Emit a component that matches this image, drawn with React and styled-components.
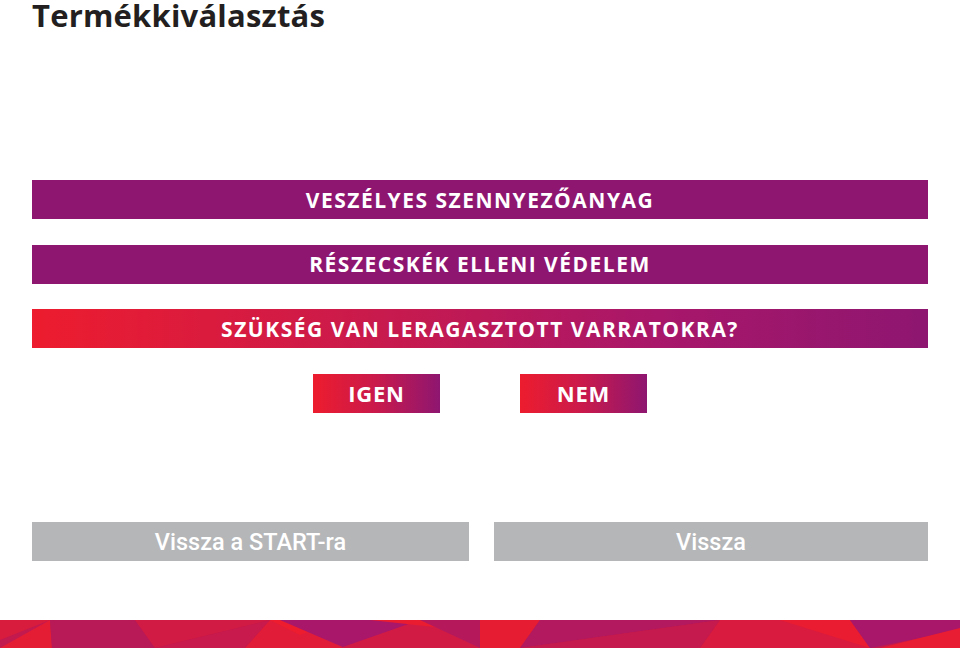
import React from "react";
import styled, { createGlobalStyle } from "styled-components";

const Global = createGlobalStyle`
  html, body { margin: 0; padding: 0; background: #ffffff; }
  body { font-family: "Open Sans", "Liberation Sans", sans-serif; }
`;

const Page = styled.div`
  width: 960px;
  height: 648px;
  display: flex;
  flex-direction: column;
  overflow: hidden;
`;

const Title = styled.h1`
  margin: 0;
  padding: 0 0 0 32px;
  height: 34px;
  font-family: "Open Sans", sans-serif;
  font-weight: 700;
  font-size: 31px;
  line-height: 31px;
  color: #231f20;
  letter-spacing: 0.2px;
`;

const Stack = styled.div`
  margin-top: 146px;
  padding: 0 32px;
  display: flex;
  flex-direction: column;
  gap: 25.5px;
`;

const Bar = styled.div`
  height: 39px;
  display: flex;
  align-items: center;
  justify-content: center;
  background: ${(p) =>
    p.$gradient
      ? "linear-gradient(90deg, #ed1c2e 0%, #c71a4e 40%, #a8176a 70%, #8e1670 100%)"
      : "#8e1670"};
  color: #ffffff;
  font-family: "Open Sans", sans-serif;
  font-weight: 700;
  font-size: 21px;
  letter-spacing: 1.5px;
`;

const Choices = styled.div`
  display: flex;
  justify-content: center;
  gap: 80px;
`;

const Choice = styled.button`
  width: 127px;
  height: 39px;
  border: none;
  padding: 0;
  background: linear-gradient(90deg, #ed1c2e 0%, #c91a4c 50%, #8e1670 100%);
  color: #ffffff;
  font-family: "Open Sans", sans-serif;
  font-weight: 700;
  font-size: 22px;
  letter-spacing: 0.8px;
`;

const NavRow = styled.div`
  margin-top: 109.5px;
  padding: 0 32px;
  display: grid;
  grid-template-columns: 437px 1fr;
  gap: 25px;
`;

const NavButton = styled.button`
  height: 39px;
  border: none;
  padding: 0;
  background: #b5b6b8;
  color: #ffffff;
  font-family: "Roboto", sans-serif;
  font-weight: 500;
  font-size: 23.5px;
`;

const Footer = styled.div`
  margin-top: auto;
  height: 28px;
  background: #c01a50;
  display: flex;
`;

const FooterArt = styled.svg`
  width: 960px;
  height: 28px;
  display: block;
`;

export default function App() {
  return (
    <Page>
      <Global />
      <Title>Termékkiválasztás</Title>
      <Stack>
        <Bar>VESZÉLYES SZENNYEZŐANYAG</Bar>
        <Bar>RÉSZECSKÉK ELLENI VÉDELEM</Bar>
        <Bar $gradient>SZÜKSÉG VAN LERAGASZTOTT VARRATOKRA?</Bar>
        <Choices>
          <Choice>IGEN</Choice>
          <Choice>NEM</Choice>
        </Choices>
      </Stack>
      <NavRow>
        <NavButton>Vissza a START-ra</NavButton>
        <NavButton>Vissza</NavButton>
      </NavRow>
      <Footer>
        <FooterArt viewBox="0 0 960 28" preserveAspectRatio="none">
          <rect x="0" y="0" width="960" height="28" fill="#c2194f" />
          <polygon points="0,0 50,0 0,20" fill="#d81c3e" />
          <polygon points="0,28 50,0 52,28" fill="#e41d35" />
          <polygon points="50,0 135,0 155,28 52,28" fill="#b81a57" />
          <polygon points="135,0 270,0 155,28" fill="#d11b44" />
          <polygon points="270,0 245,28 155,28" fill="#c81a4c" />
          <polygon points="270,0 340,0 345,28 245,28" fill="#e01c39" />
          <polygon points="270,0 340,0 300,15" fill="#ed1c2e" />
          <polygon points="280,0 345,28 420,0" fill="#a8176a" />
          <polygon points="340,28 420,0 480,0 480,28" fill="#d21b44" />
          <polygon points="370,0 480,0 480,12" fill="#ea1c30" />
          <polygon points="420,0 480,28 480,0" fill="#b5195c" />
          <polygon points="480,0 540,0 520,28 480,28" fill="#e61c32" />
          <polygon points="540,0 720,0 520,28" fill="#b2195f" />
          <polygon points="720,0 700,28 520,28" fill="#c41a4d" />
          <polygon points="720,0 850,0 870,28 700,28" fill="#d81b3f" />
          <polygon points="780,0 850,0 870,28" fill="#ea1c31" />
          <polygon points="850,0 960,0 960,10 870,28" fill="#a8176a" />
          <polygon points="880,28 960,8 960,28" fill="#e81c32" />
        </FooterArt>
      </Footer>
    </Page>
  );
}
